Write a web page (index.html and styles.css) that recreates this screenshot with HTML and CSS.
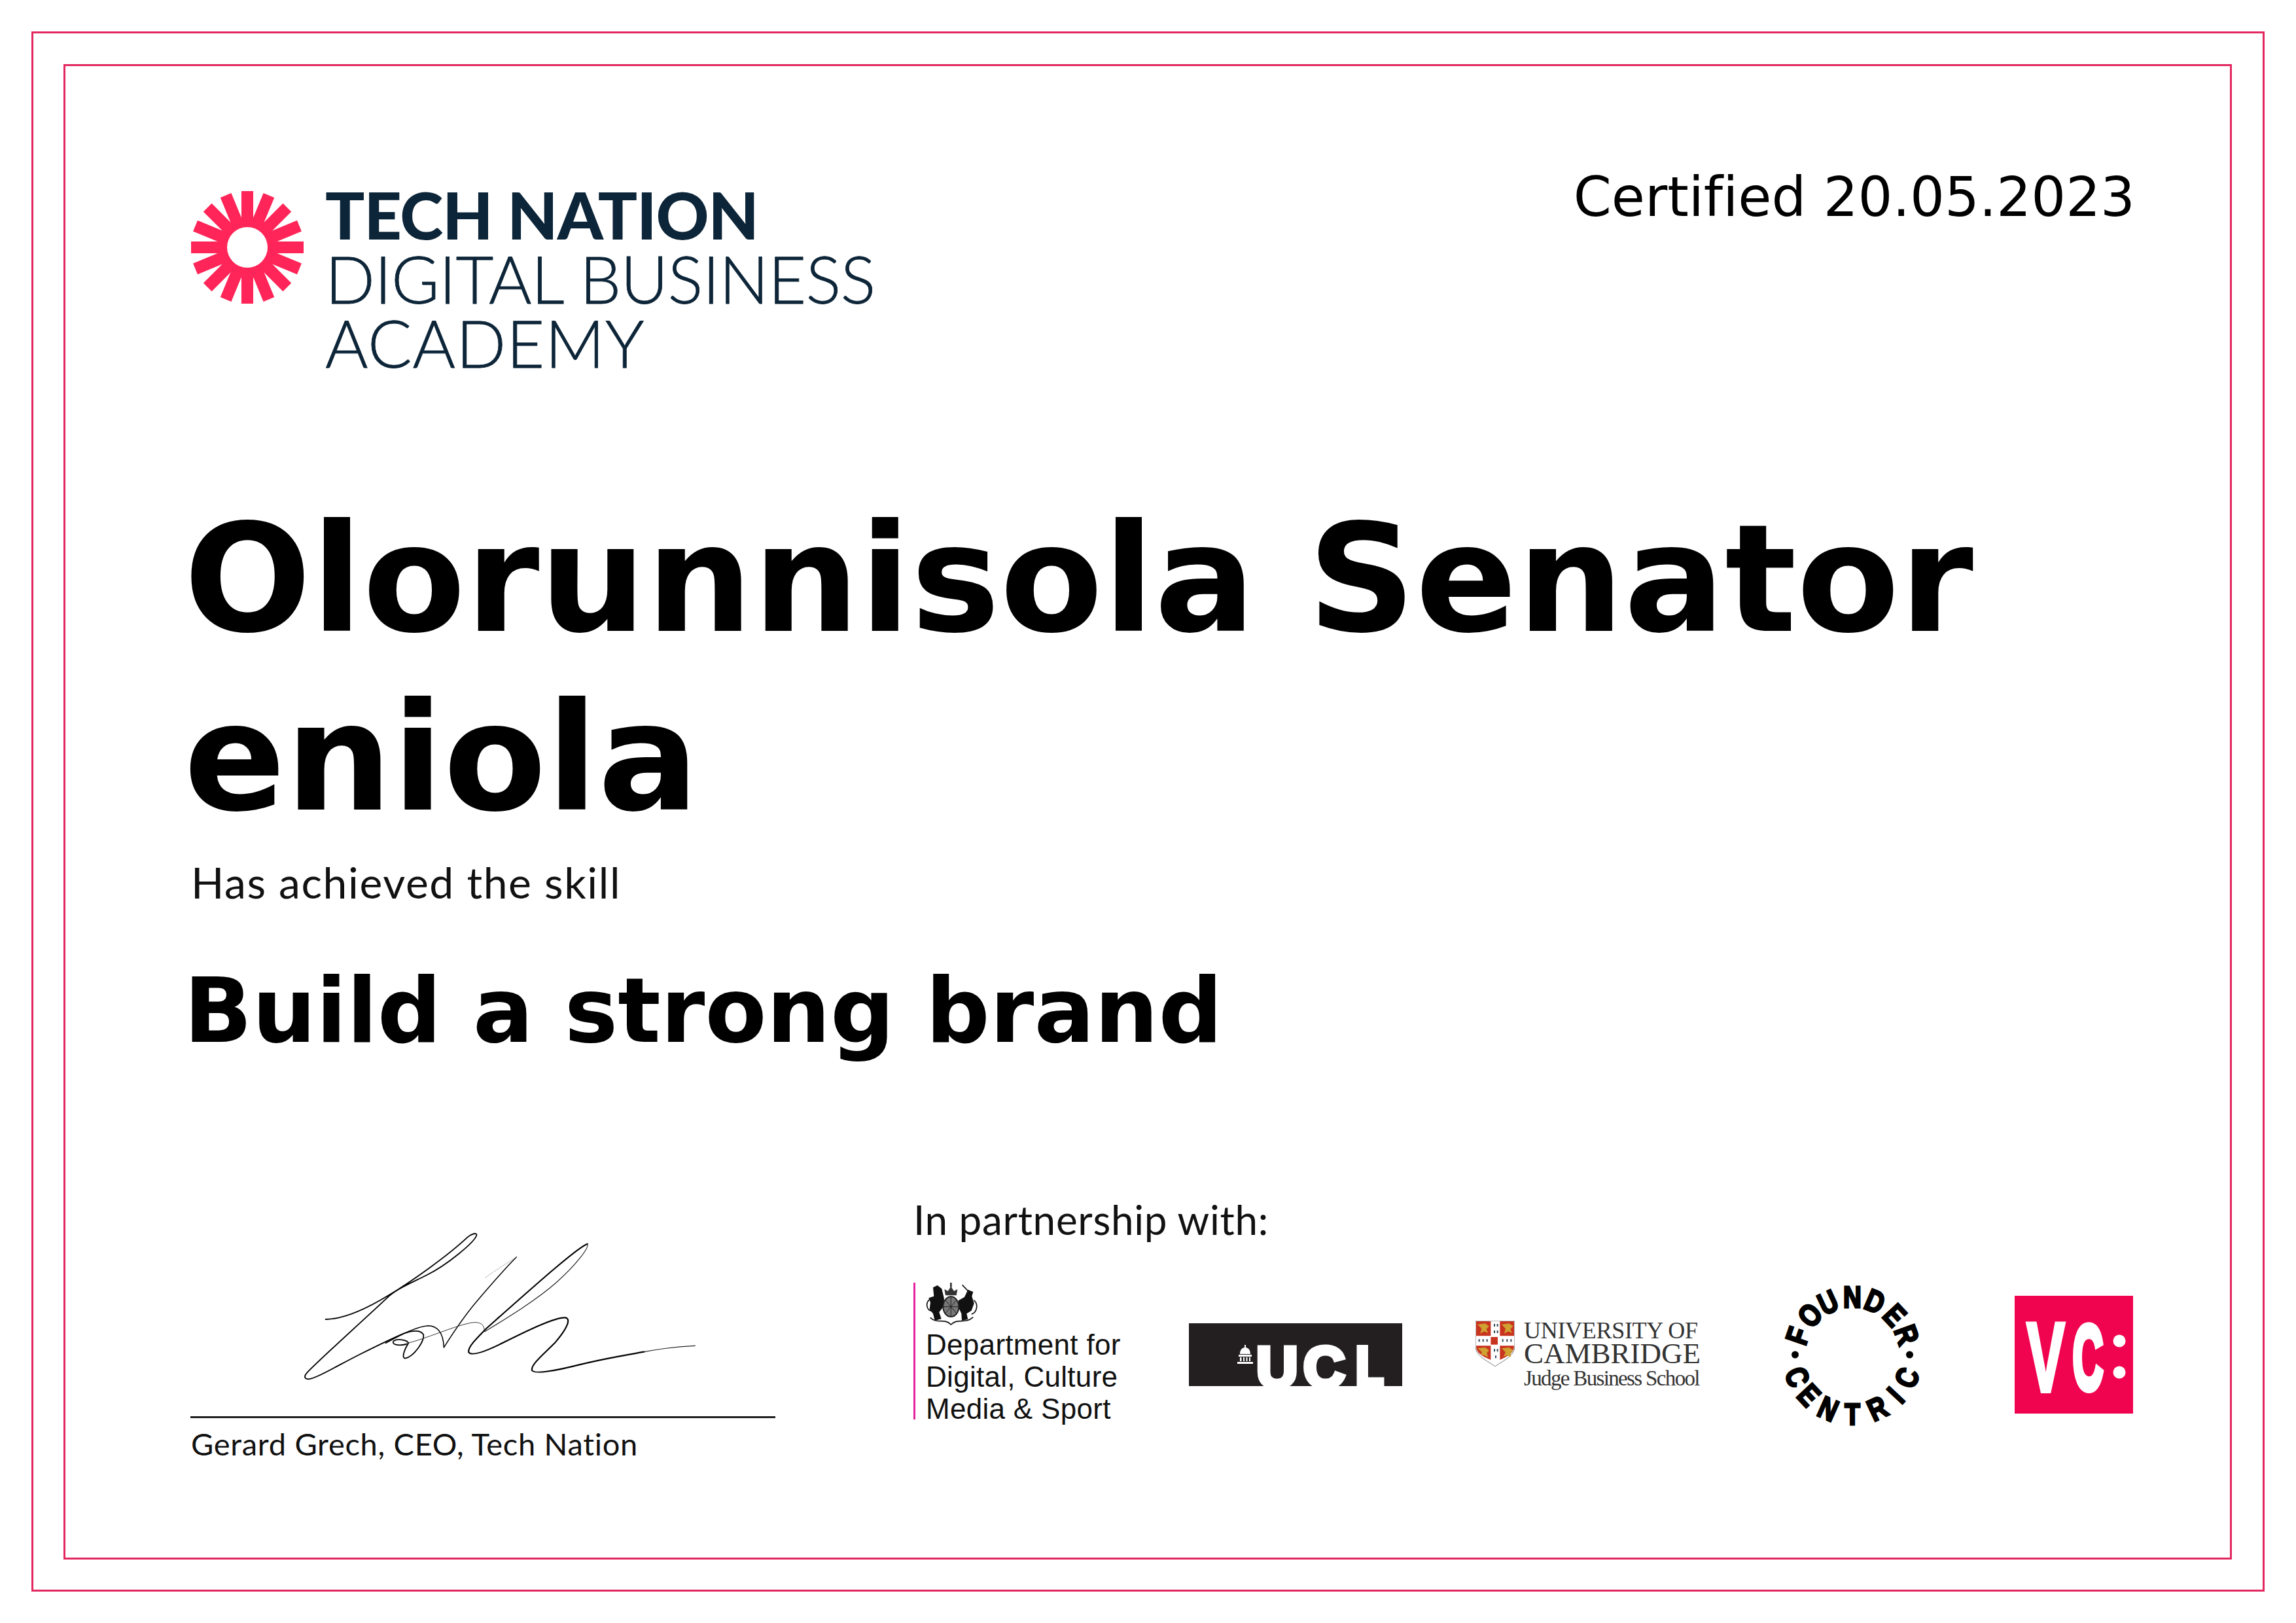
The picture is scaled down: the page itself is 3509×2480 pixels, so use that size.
FILE: index.html
```html
<!DOCTYPE html>
<html lang="en">

<head>
  <meta charset="UTF-8">
  <meta name="viewport" content="width=device-width, initial-scale=1.0">
  <title>Certificate</title>
  <link rel="stylesheet" href="styles.css">
</head>

<body>
  <div class="page">
    <div class="frame">
      <div class="content">

        <div class="head">
          <div class="logo">
            <svg class="sun" viewBox="-86 -86 172 172" width="172" height="172">
              <g stroke="#ff2558" stroke-width="18">
                <line x1="-86" x2="86" y1="0" y2="0"/>
                <line x1="-86" x2="86" y1="0" y2="0" transform="rotate(22.5)"/>
                <line x1="-86" x2="86" y1="0" y2="0" transform="rotate(45)"/>
                <line x1="-86" x2="86" y1="0" y2="0" transform="rotate(67.5)"/>
                <line x1="-86" x2="86" y1="0" y2="0" transform="rotate(90)"/>
                <line x1="-86" x2="86" y1="0" y2="0" transform="rotate(112.5)"/>
                <line x1="-86" x2="86" y1="0" y2="0" transform="rotate(135)"/>
                <line x1="-86" x2="86" y1="0" y2="0" transform="rotate(157.5)"/>
              </g>
              <circle r="31" fill="#fff"/>
            </svg>
            <div class="logo-text">
              <div class="logo-bold">TECH NATION</div>
              <div>DIGITAL BUSINESS</div>
              <div class="logo-last">ACADEMY</div>
            </div>
          </div>
          <div class="certified">Certified 20.05.2023</div>
        </div>

        <h1 class="name">Olorunnisola Senator eniola</h1>
        <p class="achieved">Has achieved the skill</p>
        <h2 class="skill">Build a strong brand</h2>

        <div class="foot">
          <div class="signed">
            <svg class="signature" viewBox="0 0 1836 750" width="612" height="250" fill="none" stroke="#000" stroke-linecap="round" stroke-linejoin="round">
              <path stroke-width="5.500" d="M140 441C230 440 340 385 430 330C530 270 700 150 790 65C810 48 835 42 832 55C825 85 700 190 600 240C530 275 470 300 430 335C330 430 150 590 60 680C42 698 38 712 60 715C90 716 200 650 300 600C370 565 440 530 500 505C540 492 575 490 588 510C595 540 545 612 505 620C490 620 495 590 520 550C515 535 470 528 452 540C440 555 470 565 510 555"/>
              <path stroke-width="4.500" d="M415 550C470 520 550 475 610 470C650 470 680 500 682 570C720 510 770 430 840 350C900 280 970 200 1015 155"/>
              <path stroke-width="2" stroke="#999" d="M1015 155C970 185 920 215 872 250"/>
              <path stroke-width="3" stroke="#333" d="M510 552C600 530 720 475 800 458C840 450 868 458 868 495"/>
              <path stroke-width="6.500" d="M1340 95C1290 115 1100 285 880 480C830 530 790 570 796 592C810 610 870 590 950 550C1050 500 1190 430 1240 433C1265 440 1250 480 1190 550C1130 610 1080 650 1086 675C1100 695 1200 675 1300 650C1420 620 1500 608 1600 590"/>
              <path stroke-width="3.500" stroke="#222" d="M1600 590C1680 575 1760 565 1834 562"/>
              <path stroke-width="3.500" stroke="#222" d="M1340 95C1350 110 1290 190 1200 270C1110 350 980 430 870 497"/>
            </svg>
            <div class="sign-line"></div>
            <div class="sign-name">Gerard Grech, CEO, Tech Nation</div>
          </div>

          <div class="partners">
            <div class="partners-title">In partnership with:</div>
            <div class="partner-row">

              <div class="dcms">
                <svg class="arms" viewBox="75 30 240 210" width="80" height="70">
                  <path fill="#111" d="M108 52L128 42L148 58L158 100L160 130L148 150L136 165L146 196L116 204L108 172L92 152L96 120L88 100L112 92Z"/>
                  <path fill="#111" d="M268 62L292 72L286 92L296 125L284 158L262 172L268 198L240 204L238 172L226 146L224 112L252 96Z"/>
                  <path fill="none" stroke="#111" stroke-width="5" d="M96 105C70 120 78 158 104 160M242 40L272 72M294 110C316 125 312 165 284 175M95 190C130 222 160 190 190 222C222 190 255 222 292 188"/>
                  <path fill="#333" d="M165 88L160 60L176 68L190 48L204 68L220 60L215 88Z"/>
                  <rect x="186" y="30" width="8" height="22" fill="#333"/>
                  <ellipse cx="190" cy="140" rx="36" ry="46" fill="#777" stroke="#222" stroke-width="6"/>
                  <path stroke="#222" stroke-width="3" d="M190 96V184M156 140H224M165 110L215 170M215 110L165 170"/>
                </svg>
                <div class="dcms-text">Department for<br>Digital, Culture<br>Media &amp; Sport</div>
              </div>

              <svg class="ucl" viewBox="0 0 326 96" width="326" height="96">
                <rect width="326" height="96" fill="#231f20"/>
                <text class="ucl-letters" x="103 175" y="97">UC</text>
                <text class="ucl-letters ucl-last" transform="translate(256,97) scale(.78,1)">L</text>
                <path fill="#fff" d="M85 33H87V37C92 38 94 42 94 47H78C78 42 80 38 85 37ZM76 48H96V51H76ZM78 52H80.500V58H78ZM83 52H85V58H83ZM87.500 52H89.500V58H87.500ZM92 52H94V58H92ZM74 59H98V62H74Z"/>
              </svg>

              <div class="cam">
                <svg class="shield" viewBox="48 55 180 210" width="60" height="70">
                  <path fill="#fff" stroke="#777" stroke-width="3" d="M48 55H228V170C228 220 170 240 138 265C106 240 48 220 48 170Z"/>
                  <g fill="#c9341f">
                    <path d="M51 58H118V125H51ZM160 58H225V125H160ZM51 170H118V235L90 222C66 210 51 195 51 170ZM160 170H225C225 195 210 210 186 222L160 235Z"/>
                    <rect x="118" y="130" width="32" height="35"/>
                  </g>
                  <g fill="#d0a030">
                    <path d="M58 72L92 68L110 80L98 94L106 112L88 104L70 114L76 92Z"/>
                    <path d="M168 72L202 68L220 80L208 94L216 112L198 104L180 114L186 92Z"/>
                    <path d="M58 182L92 178L110 190L100 204L106 222L88 214L72 210L78 200Z"/>
                    <path d="M168 182L202 178L220 190L210 204L210 222L192 214L176 220L186 200Z"/>
                  </g>
                  <g fill="#345">
                    <path d="M132 70h6v12h-6zM146 70h6v12h-6zM132 100h6v12h-6zM146 100h6v12h-6zM62 140h6v12h-6zM80 140h6v12h-6zM98 140h6v12h-6zM170 140h6v12h-6zM190 140h6v12h-6zM208 140h6v12h-6zM132 185h6v12h-6zM146 185h6v12h-6zM138 215h6v12h-6z"/>
                  </g>
                </svg>
                <div class="cam-text">
                  <span class="cam-uni">UNIVERSITY OF</span>
                  <span class="cam-name">CAMBRIDGE</span>
                  <span class="cam-school">Judge Business School</span>
                </div>
              </div>

              <svg class="founder" viewBox="-110 -110 220 220" width="220" height="220">
                <g class="fc-letters">
                  <text transform="rotate(-71) translate(0,-72) scale(.82,1)">F</text>
                  <text transform="rotate(-47) translate(0,-72) scale(.82,1)">O</text>
                  <text transform="rotate(-25) translate(0,-72) scale(.82,1)">U</text>
                  <text transform="translate(0,-72) scale(.82,1)">N</text>
                  <text transform="rotate(23) translate(0,-72) scale(.82,1)">D</text>
                  <text transform="rotate(47) translate(0,-72) scale(.82,1)">E</text>
                  <text transform="rotate(70) translate(0,-72) scale(.82,1)">R</text>
                  <text transform="rotate(68) translate(0,107) scale(.82,1)">C</text>
                  <text transform="rotate(47) translate(0,107) scale(.82,1)">E</text>
                  <text transform="rotate(24) translate(0,107) scale(.82,1)">N</text>
                  <text transform="translate(0,107) scale(.82,1)">T</text>
                  <text transform="rotate(-25) translate(0,107) scale(.82,1)">R</text>
                  <text transform="rotate(-47) translate(0,107) scale(.82,1)">I</text>
                  <text transform="rotate(-67) translate(0,107) scale(.82,1)">C</text>
                </g>
                <circle cx="-87.500" cy="0" r="5.500"/>
                <circle cx="87.500" cy="0" r="5.500"/>
              </svg>

              <svg class="vc" viewBox="0 0 181 180" width="181" height="180">
                <rect width="181" height="180" fill="#f0044f"/>
                <text class="vc-v" transform="translate(47.500,146) scale(.58,1)">V</text>
                <text class="vc-c" transform="translate(112,143) scale(.46,1)">C</text>
                <circle cx="160" cy="69" r="9.500" fill="#fff"/>
                <circle cx="160" cy="117" r="9.500" fill="#fff"/>
              </svg>

            </div>
          </div>
        </div>

      </div>
    </div>
  </div>
</body>

</html>
```

FILE: styles.css
```css
* {
  box-sizing: border-box;
}

html, body {
  margin: 0;
  padding: 0;
  background: #fff;
}

.page {
  width: 3509px;
  height: 2480px;
  padding: 48px 48px 48px 48px;
}

.page > .frame {
  height: 100%;
  border: 3px solid #e2285f;
  padding: 47px 47px 46px 46px;
}

.content {
  height: 100%;
  border: 3px solid #e2285f;
  padding: 153px 145px 0 192px;
}

.head {
  display: flex;
  justify-content: space-between;
  align-items: flex-start;
}

.logo {
  display: flex;
  align-items: flex-start;
  margin-top: 38px;
}

.logo .sun {
  flex: none;
}

.logo-text {
  margin: -14px 0 0 33px;
  font-family: "Lato", sans-serif;
  font-size: 100px;
  font-weight: 300;
  line-height: 98px;
  color: #0d2538;
  letter-spacing: -.5px;
  -webkit-text-stroke: .8px #0d2538;
}

.logo-bold {
  font-weight: 900;
  letter-spacing: -1px;
  -webkit-text-stroke: 0;
}

.logo-last {
  letter-spacing: 1px;
}

.certified {
  font-family: "DejaVu Sans", sans-serif;
  font-size: 83.200px;
  line-height: 96px;
  font-variant-ligatures: none;
  color: #000;
}

.name {
  margin: 176px 0 0 -11px;
  font-family: "DejaVu Sans", sans-serif;
  font-size: 229px;
  font-weight: bold;
  line-height: 273px;
  color: #000;
}

.achieved {
  margin: 14px 0 0;
  font-family: "Lato", sans-serif;
  font-size: 66px;
  line-height: 80px;
  letter-spacing: 1.600px;
  color: #111;
}

.skill {
  margin: 77px 0 0 -11px;
  font-family: "DejaVu Sans", sans-serif;
  font-size: 137px;
  font-weight: bold;
  line-height: 160px;
  color: #000;
}

.foot {
  display: flex;
  margin-top: 198px;
}

.signed {
  flex: none;
  width: 893px;
  padding-top: 46px;
  margin-right: 211px;
}

.signature {
  display: block;
  margin-left: 159px;
}

.sign-line {
  height: 3px;
  margin: 45px 0 0 -1px;
  background: #222;
}

.sign-name {
  margin-top: 9px;
  font-family: "Lato", sans-serif;
  font-size: 47px;
  line-height: 60px;
  letter-spacing: .7px;
  color: #111;
}

.partners {
  flex: 1;
}

.partners-title {
  font-family: "Lato", sans-serif;
  font-size: 62px;
  line-height: 80px;
  letter-spacing: .7px;
  color: #111;
}

.partner-row {
  display: flex;
  align-items: center;
  margin-top: 57px;
}

.dcms {
  flex: none;
  align-self: flex-start;
  width: 315px;
  height: 209px;
  border-left: 3px solid #e6239f;
  padding-left: 16px;
}

.arms {
  display: block;
}

.dcms-text {
  font-family: "Liberation Sans", Arial, sans-serif;
  font-size: 44px;
  line-height: 49px;
  letter-spacing: .3px;
  color: #111;
  white-space: nowrap;
}

.ucl {
  flex: none;
  margin-left: 106px;
  overflow: visible;
}

.ucl-letters {
  font-family: "Liberation Sans", Arial, sans-serif;
  font-size: 88px;
  font-weight: bold;
  fill: #fff;
  stroke: #fff;
  stroke-width: 7px;
}

.ucl-last {
  font-size: 85px;
  stroke-width: 10px;
}

.cam {
  flex: none;
  display: flex;
  align-items: flex-start;
  margin-left: 112px;
}

.shield {
  margin-right: 14px;
}

.cam-text {
  font-family: "Liberation Serif", "Times New Roman", serif;
  color: #333;
  white-space: nowrap;
}

.cam-text span {
  display: block;
}

.cam-uni {
  font-size: 36px;
  line-height: 30px;
  letter-spacing: -.3px;
}

.cam-name {
  font-size: 45px;
  line-height: 41px;
}

.cam-school {
  font-size: 33px;
  line-height: 34px;
  letter-spacing: -1.650px;
}

.founder {
  flex: none;
  margin-left: 122px;
  overflow: visible;
}

.fc-letters {
  font-family: "Liberation Sans", Arial, sans-serif;
  font-size: 47px;
  font-weight: bold;
  text-anchor: middle;
  stroke: #000;
  stroke-width: 3px;
}

.vc {
  flex: none;
  margin-left: 138px;
}

.vc-v, .vc-c {
  font-family: "Liberation Sans", Arial, sans-serif;
  font-weight: bold;
  text-anchor: middle;
  fill: #fff;
  stroke: #fff;
}

.vc-v {
  font-size: 150px;
  stroke-width: 6px;
}

.vc-c {
  font-size: 140px;
  stroke-width: 10px;
}
```
